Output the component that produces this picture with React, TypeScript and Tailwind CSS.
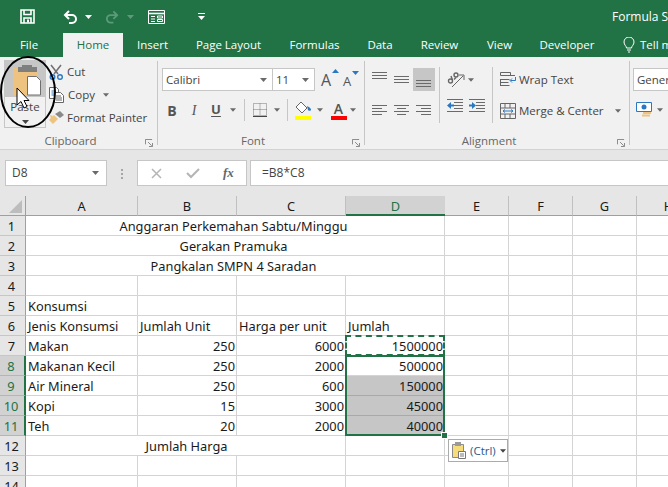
import * as React from 'react';

const ui = "font-['Open_Sans','Noto_Sans',sans-serif]";

function Caret({ className = '', color = '#6a6a6a', w = 7 }: { className?: string; color?: string; w?: number }) {
  return (
    <svg width={w} height="4" viewBox="0 0 7 4" className={`shrink-0 ${className}`}>
      <path d="M0 0h7L3.500 4z" fill={color} />
    </svg>
  );
}

function Launcher() {
  return (
    <svg width="8" height="8" viewBox="0 0 9 9" className="mr-[4px] mt-[3px] shrink-0" fill="none" stroke="#7a7a7a">
      <path d="M.5 6V.5H8" />
      <path d="M3.500 3.500l4 4M8.500 4.500v4h-4" />
    </svg>
  );
}

function Lines({ rows }: { rows: [number, number, number][] }) {
  return (
    <svg width="16" height="17" viewBox="0 0 16 17" fill="none" stroke="#6a6a6a" strokeWidth="1">
      {rows.map(([x1, x2, y]) => (
        <path key={y} d={`M${x1} ${y + 0.5}H${x2}`} />
      ))}
    </svg>
  );
}

function Sep({ className = '' }: { className?: string }) {
  return <div className={`w-px bg-[#c6c6c6] shrink-0 ${className}`} />;
}

function Group({ label, className, children }: { label: string; className: string; children: React.ReactNode }) {
  return (
    <div className={`flex flex-col shrink-0 h-[84px] my-1 border-r border-[#c6c6c6] ${className}`}>
      <div className="flex-1 min-h-0">{children}</div>
      <div className="flex h-4 -mb-1 items-center">
        <div className="flex-1 text-center pr-[4px] text-[11.500px] leading-4 text-[#666]">{label}</div>
        <Launcher />
      </div>
    </div>
  );
}

function TitleBar() {
  return (
    <div className="flex items-center h-[33px] bg-[#217346] text-white shrink-0 whitespace-nowrap">
      <svg width="15" height="15" viewBox="0 0 15 15" className="ml-[20px] shrink-0" fill="none" stroke="#fff" strokeWidth="1.6">
        <path d="M1 1h13v13H1z" />
        <path d="M4 1v4.500h7V1M4 14V9h7v5" />
        <path d="M8 10.500v3" strokeWidth="2" />
      </svg>
      <svg width="15" height="14" viewBox="0 0 15 14" className="ml-[28px] shrink-0" fill="none" stroke="#fff" strokeWidth="2">
        <path d="M6 1L2 5l4 4" />
        <path d="M2 5h7a4 4 0 0 1 0 8H6" />
      </svg>
      <Caret color="#fff" className="ml-[7px]" />
      <svg width="14" height="14" viewBox="0 0 15 14" className="ml-[13px] shrink-0" fill="none" stroke="#5e9a7a" strokeWidth="2">
        <path d="M9 1l4 4-4 4" />
        <path d="M13 5H6a4 4 0 0 0 0 8h3" />
      </svg>
      <Caret color="#5e9a7a" className="ml-[8px]" />
      <svg width="17" height="14" viewBox="0 0 17 14" className="ml-[14px] shrink-0" fill="none" stroke="#fff">
        <path d="M.5.5h16v13H.5z" />
        <path d="M1 3.500h15" strokeWidth="1.6" />
        <path d="M3 6.500h4M3 9h4M3 11.500h4" />
        <path d="M9.500 6h5v2h-5zM9.500 9.500h5v2h-5z" />
      </svg>
      <div className="ml-[33px] flex flex-col gap-[2px] shrink-0">
        <div className="w-[7px] h-px bg-white" />
        <Caret color="#fff" />
      </div>
      <span className="ml-[407px] text-[12px] shrink-0">Formula Se</span>
    </div>
  );
}

function Tabs() {
  const tabs: [string, string][] = [
    ['Insert', 'w-[59px]'],
    ['Page Layout', 'w-[93px]'],
    ['Formulas', 'w-[79px]'],
    ['Data', 'w-[52px]'],
    ['Review', 'w-[67px]'],
    ['View', 'w-[53px]'],
    ['Developer', 'w-[82px]'],
  ];
  return (
    <div className="flex h-[24px] bg-[#217346] text-white text-[11.500px] leading-[24px] shrink-0 whitespace-nowrap">
      <div className="w-[58px] shrink-0 text-center">File</div>
      <div className="ml-[5px] w-[60px] shrink-0 text-center bg-[#f1f1f1] text-[#217346]">Home</div>
      {tabs.map(([t, w]) => (
        <div key={t} className={`${w} shrink-0 text-center`}>
          {t}
        </div>
      ))}
      <svg width="12" height="16" viewBox="0 0 12 16" className="ml-[15px] mt-[4px] shrink-0" fill="none" stroke="#fff">
        <path d="M3.500 11C3.500 9 1 8 1 5a5 5 0 0 1 10 0c0 3-2.500 4-2.500 6z" />
        <path d="M4 13h4M5 15h2" />
      </svg>
      <span className="ml-[5px] shrink-0">Tell m</span>
    </div>
  );
}

function Clipboard() {
  return (
    <Group label="Clipboard" className="w-[158px]">
      <div className="flex text-[11.500px] text-[#444] whitespace-nowrap">
        <div className="ml-[4px] -mt-px w-[42px] h-[68px] border border-[#c6c6c6] flex flex-col items-center shrink-0">
          <div className="w-full h-[36px] bg-[#c6c6c6] flex items-start pt-[4px] pl-[8px]">
            <svg width="28" height="31" viewBox="0 0 28 31" className="shrink-0">
              <path d="M0 3h25v27H0z" fill="#edc37f" />
              <path d="M5 2h19v5H5z" fill="#7f7f7f" />
              <path d="M9 0h10v3H9z" fill="#7f7f7f" />
              <path d="M14.500 11.500h9l4 4v14.500h-13z" fill="#fff" stroke="#6f6f6f" />
            </svg>
          </div>
          <span className="mt-[1px] leading-[17px]">Paste</span>
          <Caret className="mt-[5px]" color="#444" />
        </div>
        <div className="ml-[3px] -mt-px flex flex-col">
          <div className="flex items-center h-[23px]">
            <svg width="15" height="16" viewBox="0 0 15 16" className="shrink-0" fill="none">
              <path d="M2 1l7 9M12 1L5 10" stroke="#6f6f6f" strokeWidth="1.500" />
              <circle cx="3.500" cy="13" r="2.300" stroke="#2b78c2" strokeWidth="1.400" />
              <circle cx="11" cy="13" r="2.300" stroke="#2b78c2" strokeWidth="1.400" />
            </svg>
            <span className="ml-[3px]">Cut</span>
          </div>
          <div className="flex items-center h-[23px]">
            <svg width="16" height="16" viewBox="0 0 16 16" className="shrink-0" fill="none" stroke="#666">
              <path d="M.5.500h7l2 2v9h-9z" fill="#fff" />
              <path d="M2.500 4h4M2.500 6h4M2.500 8h4" stroke="#2b78c2" />
              <path d="M5.500 5.500h6l3 3v7h-9z" fill="#fff" />
              <path d="M7 9h5M7 11h6M7 13h6" />
            </svg>
            <span className="ml-[3px]">Copy</span>
            <Caret className="ml-[8px]" w={6} />
          </div>
          <div className="flex items-center h-[23px]">
            <svg width="16" height="15" viewBox="0 0 16 15" className="shrink-0">
              <path d="M0 10l5-5 4 4-5 5z" fill="#edc37f" />
              <path d="M6 4l5-3 4 4-4 3z" fill="#8a8a8a" />
              <path d="M1 5l3 1-2 3z" fill="#edc37f" />
            </svg>
            <span className="ml-[2px]">Format Painter</span>
          </div>
        </div>
      </div>
    </Group>
  );
}

function FontGroup() {
  return (
    <Group label="Font" className="w-[207px]">
      <div className="pl-[4px] text-[#444]">
        <div className="flex mt-[7px] h-[23px] text-[11.500px] leading-[21px]">
          <div className="w-[111px] shrink-0 bg-white border border-[#c6c6c6] flex items-center pl-[3px] pr-[5px] justify-between">
            Calibri
            <Caret />
          </div>
          <div className="w-[43px] shrink-0 -ml-px bg-white border border-[#c6c6c6] flex items-center pl-[3px] pr-[5px] justify-between">
            11
            <Caret />
          </div>
          <div className="relative ml-[6px] w-[22px] shrink-0 text-[16px] leading-[24px] text-[#555]">
            A
            <svg width="7" height="4" viewBox="0 0 7 4" className="absolute left-[11px] top-[1px]">
              <path d="M0 4h7L3.500 0z" fill="#2b78c2" />
            </svg>
          </div>
          <div className="relative w-[20px] shrink-0 text-[13px] leading-[26px] text-[#555]">
            A
            <svg width="7" height="4" viewBox="0 0 7 4" className="absolute left-[9px] top-[3px]">
              <path d="M0 0h7L3.500 4z" fill="#2b78c2" />
            </svg>
          </div>
        </div>
        <div className="flex items-center mt-[7px] h-[24px] text-[#555]">
          <div className="w-[20px] text-center text-[14px] font-bold">B</div>
          <div className="ml-px w-[22px] text-center text-[14px] italic font-['Liberation_Serif',serif]">I</div>
          <div className="w-[22px] text-center text-[13px] font-bold underline underline-offset-2">U</div>
          <Caret w={6} className="ml-[3px]" />
          <Sep className="ml-[8px] h-[22px]" />
          <svg width="14" height="14" viewBox="0 0 14 14" className="ml-[8px] shrink-0" fill="none" stroke="#777" strokeDasharray="1 1">
            <path d="M.5.500h13v12H.5zM7 .5v12M.5 6.500h13" />
            <path d="M0 13.500h14" stroke="#444" strokeDasharray="none" />
          </svg>
          <Caret w={6} className="ml-[7px]" />
          <Sep className="ml-[7px] h-[22px]" />
          <svg width="17" height="19" viewBox="0 0 17 19" className="ml-[7px] shrink-0">
            <path d="M6 1l6 6-5 5-6-6z" fill="#fff" stroke="#666" />
            <path d="M12 5c3 1 4 3 4 4a2 2 0 0 1-3 0z" fill="#2b78c2" />
            <path d="M0 15h16v4H0z" fill="#ffff00" />
          </svg>
          <Caret w={6} className="ml-[5px]" />
          <div className="ml-[9px] w-[13px] flex flex-col items-center shrink-0">
            <span className="text-[14px] leading-[15px] font-semibold">A</span>
            <div className="w-[16px] h-[4px] bg-[#ff0000] shrink-0" />
          </div>
          <Caret w={6} className="ml-[5px]" />
        </div>
      </div>
    </Group>
  );
}

function AlignCell({ rows, active }: { rows: [number, number, number][]; active?: boolean }) {
  return (
    <div className={`w-[22px] h-[23px] flex items-center justify-center ${active ? 'bg-[#c6c6c6]' : ''}`}>
      <Lines rows={rows} />
    </div>
  );
}

function IndentIcon({ flip }: { flip?: boolean }) {
  return (
    <svg width="16" height="13" viewBox="0 0 16 13" className="shrink-0" fill="none">
      <path d="M0 .5h16M7 3.500h9M7 6.500h9M7 9.500h9M0 12.500h16" stroke="#6a6a6a" />
      {flip ? (
        <path d="M0 5.500h3V3l4 3.500L3 10V7.500H0z" fill="#2b78c2" />
      ) : (
        <path d="M7 5.500H4V3L0 6.500 4 10V7.500h3z" fill="#2b78c2" />
      )}
    </svg>
  );
}

function Alignment() {
  return (
    <Group label="Alignment" className="w-[265px]">
      <div className="flex text-[11.500px] text-[#444] whitespace-nowrap">
        <div className="w-[74px] pl-[4px] pt-[7px] shrink-0">
          <div className="flex">
            <div className="-mt-[2px]">
              <AlignCell rows={[[0, 15, 3], [0, 15, 6], [0, 15, 9]]} />
            </div>
            <AlignCell rows={[[0, 15, 5], [0, 15, 8], [0, 15, 11]]} />
            <AlignCell active rows={[[0, 15, 9], [0, 15, 12], [0, 15, 15]]} />
          </div>
          <div className="flex mt-[7px]">
            <AlignCell rows={[[0, 15, 4], [0, 10, 7], [0, 15, 10], [0, 10, 13]]} />
            <AlignCell rows={[[0, 15, 4], [3, 12, 7], [0, 15, 10], [3, 12, 13]]} />
            <AlignCell rows={[[0, 15, 4], [5, 15, 7], [0, 15, 10], [5, 15, 13]]} />
          </div>
        </div>
        <Sep className="mt-[6px] h-[56px]" />
        <div className="w-[52px] pl-[7px] pt-[7px] shrink-0">
          <div className="flex items-center h-[23px]">
            <svg width="18" height="17" viewBox="0 0 18 17" className="shrink-0" fill="none" stroke="#666">
              <circle cx="3.500" cy="10" r="2" strokeWidth="1.400" />
              <path d="M5.500 9L4 5M7 8.500l2-2" strokeWidth="1.400" />
              <circle cx="9" cy="4" r="2" strokeWidth="1.400" />
              <path d="M5 16L16 5M12 4h5v5" />
            </svg>
            <Caret w={6} className="ml-[3px]" />
          </div>
          <div className="flex gap-[6px] mt-[8px]">
            <IndentIcon />
            <IndentIcon flip />
          </div>
        </div>
        <Sep className="mt-[6px] h-[56px]" />
        <div className="pl-[7px] pt-[7px]">
          <div className="flex items-center h-[23px]">
            <svg width="16" height="16" viewBox="0 0 16 16" className="shrink-0" fill="none" stroke="#666">
              <path d="M.5.500h10v3H.5zM.5 7.500h9M.5 10.500h8M.5 13.500h9M.5 7v7M10 3.500h5" />
              <path d="M15.500 5v3.500h-5M12 6.500l-2 2 2 2" stroke="#2b78c2" />
            </svg>
            <span className="ml-[3px]">Wrap Text</span>
          </div>
          <div className="flex items-center h-[23px] mt-[8px]">
            <svg width="16" height="16" viewBox="0 0 16 16" className="shrink-0" fill="none" stroke="#666">
              <path d="M.5.500h15v15H.5zM.5 5h15M.5 11h15M5 .500V5M10 .500V5M5 11v4.500M10 11v4.500" />
              <path d="M3 8h10M5 6.500L3 8l2 1.500M11 6.500L13 8l-2 1.500" stroke="#2b78c2" />
            </svg>
            <span className="ml-[3px]">Merge &amp; Center</span>
            <Caret className="ml-[11px]" w={6} />
          </div>
        </div>
      </div>
    </Group>
  );
}

function NumberGroup() {
  return (
    <div className="flex flex-col pl-[3px] pt-[11px] shrink-0 text-[11.500px] text-[#444]">
      <div className="w-[60px] h-[23px] bg-white border border-[#c6c6c6] pl-[3px] leading-[21px]">Gener</div>
      <div className="flex items-center mt-[11px] ml-[3px]">
        <svg width="16" height="16" viewBox="0 0 16 16" className="shrink-0">
          <path d="M.5.500h15v9H.5z" fill="#fff" stroke="#2b78c2" />
          <circle cx="8" cy="5" r="2.500" fill="#2b78c2" />
          <path d="M7 10h8v2H7zM6 12.500h8v2H6z" fill="#edc37f" />
        </svg>
        <Caret w={6} className="ml-[5px]" />
      </div>
    </div>
  );
}

function Ribbon() {
  return (
    <div className="flex h-[93px] bg-[#f1f1f1] border-b border-[#d2d2d2] shrink-0 overflow-hidden">
      <Clipboard />
      <FontGroup />
      <Alignment />
      <NumberGroup />
    </div>
  );
}

function FormulaBar() {
  return (
    <div className="flex items-start h-[46px] pt-[10px] bg-[#e6e6e6] shrink-0 text-[12px] text-[#444]">
      <div className="ml-[5px] w-[102px] shrink-0 h-[26px] bg-white border border-[#c6c6c6] flex items-center justify-between pl-[6px] pr-[7px]">
        D8
        <Caret />
      </div>
      <div className="ml-[14px] mt-[9px] flex flex-col gap-[2px] shrink-0">
        <div className="w-[2px] h-[2px] bg-[#a6a6a6]" />
        <div className="w-[2px] h-[2px] bg-[#a6a6a6]" />
        <div className="w-[2px] h-[2px] bg-[#a6a6a6]" />
      </div>
      <div className="ml-[14px] w-[110px] shrink-0 h-[26px] bg-white border border-[#c6c6c6] flex items-center pl-[13px]">
        <svg width="11" height="11" viewBox="0 0 11 11" fill="none" stroke="#b5b5b5" strokeWidth="1.500">
          <path d="M1 1l9 9M10 1l-9 9" />
        </svg>
        <svg width="14" height="11" viewBox="0 0 14 11" className="ml-[24px]" fill="none" stroke="#b5b5b5" strokeWidth="2">
          <path d="M1 5l4 4 8-8" />
        </svg>
        <span className="ml-[23px] font-['Liberation_Serif',serif] italic font-bold text-[13px] text-[#666]">fx</span>
      </div>
      <div className="ml-[3px] w-[419px] shrink-0 h-[26px] bg-white border border-[#c6c6c6] flex items-center pl-[11px]">=B8*C8</div>
    </div>
  );
}

type Cell = { t?: string; span?: number; cls?: string; sel?: boolean };
type Row = { n: number; cells: Cell[] };

const R = 'text-right pr-[1px]';
const T = 'text-center pr-[5px]';
const left3 = (a?: string, b?: string, c?: string): Cell[] => [{ t: a }, { t: b, cls: R }, { t: c, cls: R }];
const plain = (a?: string, b?: string, c?: string, d?: string): Cell[] => [...left3(a, b, c), { t: d, cls: R }];

const rows: Row[] = [
  { n: 1, cells: [{ t: 'Anggaran Perkemahan Sabtu/Minggu', span: 4, cls: T }] },
  { n: 2, cells: [{ t: 'Gerakan Pramuka', span: 4, cls: T }] },
  { n: 3, cells: [{ t: 'Pangkalan SMPN 4 Saradan', span: 4, cls: T }] },
  { n: 4, cells: plain() },
  { n: 5, cells: plain('Konsumsi') },
  { n: 6, cells: [{ t: 'Jenis Konsumsi' }, { t: 'Jumlah Unit' }, { t: 'Harga per unit' }, { t: 'Jumlah' }] },
  { n: 7, cells: plain('Makan', '250', '6000', '1500000') },
  { n: 8, cells: plain('Makanan Kecil', '250', '2000', '500000') },
  { n: 9, cells: [...left3('Air Mineral', '250', '600'), { t: '150000', cls: R, sel: true }] },
  { n: 10, cells: [...left3('Kopi', '15', '3000'), { t: '45000', cls: R, sel: true }] },
  { n: 11, cells: [...left3('Teh', '20', '2000'), { t: '40000', cls: R, sel: true }] },
  { n: 12, cells: [{ t: 'Jumlah Harga', span: 3, cls: 'text-center' }, {}] },
  { n: 13, cells: plain() },
  { n: 14, cells: plain() },
];

function Sheet() {
  const cols = ['A', 'B', 'C', 'D', 'E', 'F', 'G', 'H'];
  const spanCls: Record<number, string> = { 1: '', 3: 'col-span-3', 4: 'col-span-4' };
  return (
    <div className="relative flex-1 overflow-hidden bg-white">
      <div className="grid grid-cols-[26px_112px_99px_109px_99px_64px_64px_64px_64px] auto-rows-[20px] w-[700px] text-[12.800px] leading-[21px] text-[#1a1a1a] font-['Noto_Sans',sans-serif]">
        <div className="bg-[#e6e6e6] border-r border-b border-[#9f9f9f] relative">
          <svg width="13" height="13" viewBox="0 0 13 13" className="absolute left-[9px] top-[4px]">
            <path d="M13 0v13H0z" fill="#bdbdbd" />
          </svg>
        </div>
        {cols.map((c) => (
          <div
            key={c}
            className={
              c === 'D'
                ? 'bg-[#d2d2d2] text-[#217346] text-center border-b-2 border-[#217346]'
                : 'bg-[#e6e6e6] text-center border-b border-r border-[#9f9f9f] [border-right-color:#c0c0c0]'
            }
          >
            {c}
          </div>
        ))}
        {rows.map((r) => {
          const active = r.n >= 8 && r.n <= 11;
          return (
            <React.Fragment key={r.n}>
              <div
                className={`text-center pr-[2px] border-b border-r ${
                  active
                    ? 'bg-[#d2d2d2] text-[#217346] border-b-[#b5b5b5] border-r-[#217346] border-r-2'
                    : 'bg-[#e6e6e6] border-[#c6c6c6] border-r-[#9f9f9f]'
                }`}
              >
                {r.n}
              </div>
              {r.cells.map((c, i) => (
                <div
                  key={i}
                  className={`border-r border-b whitespace-nowrap pl-[2px] ${spanCls[c.span ?? 1]} ${c.cls ?? ''} ${
                    c.sel ? 'bg-[#c6c6c6] border-[#a9a9a9]' : 'border-[#d4d4d4]'
                  }`}
                >
                  {c.t}
                </div>
              ))}
              {cols.slice(4).map((c) => (
                <div key={c} className="border-r border-b border-[#d4d4d4]" />
              ))}
            </React.Fragment>
          );
        })}
      </div>
      {/* copy marquee + selection */}
      <div className="absolute left-[345px] top-[139px] w-[100px] h-[21px] border-2 border-dashed border-[#217346]" />
      <div className="absolute left-[345px] top-[159px] w-[100px] h-[81px] border-2 border-[#217346]" />
      <div className="absolute left-[442px] top-[237px] w-[5px] h-[5px] bg-[#217346] outline outline-1 outline-white" />
      <div className="absolute left-[448px] top-[243px] w-[60px] h-[23px] bg-white border border-[#ababab] flex items-center pl-[3px] text-[11.500px] text-[#2b5a8a]">
        <svg width="14" height="17" viewBox="0 0 14 17" className="shrink-0">
          <path d="M.5 2.500h11v13H.5z" fill="#f6dc7a" stroke="#8a8a8a" />
          <path d="M3 0h6v4H3z" fill="#9a9a9a" />
          <path d="M6.500 9.500h7v7h-7z" fill="#fff" stroke="#777" />
          <path d="M8 12h4M8 14h4" stroke="#777" />
        </svg>
        <span className="ml-[4px]">(Ctrl)</span>
        <Caret w={6} className="ml-[4px]" color="#444" />
      </div>
    </div>
  );
}

export default function App() {
  return (
    <div className={`relative flex flex-col w-[668px] h-[487px] overflow-hidden ${ui}`}>
      <TitleBar />
      <Tabs />
      <Ribbon />
      <FormulaBar />
      <Sheet />
      {/* annotation drawn over the screenshot */}
      <svg width="60" height="76" viewBox="0 0 60 76" className="absolute left-0 top-[54px]" fill="none">
        <ellipse cx="28" cy="38" rx="27" ry="35" stroke="#000" strokeWidth="2" />
        <path d="M17 34v17l4-3.500 3 6.500 3-1.500-3-6h5z" fill="#fff" stroke="#000" />
      </svg>
    </div>
  );
}
